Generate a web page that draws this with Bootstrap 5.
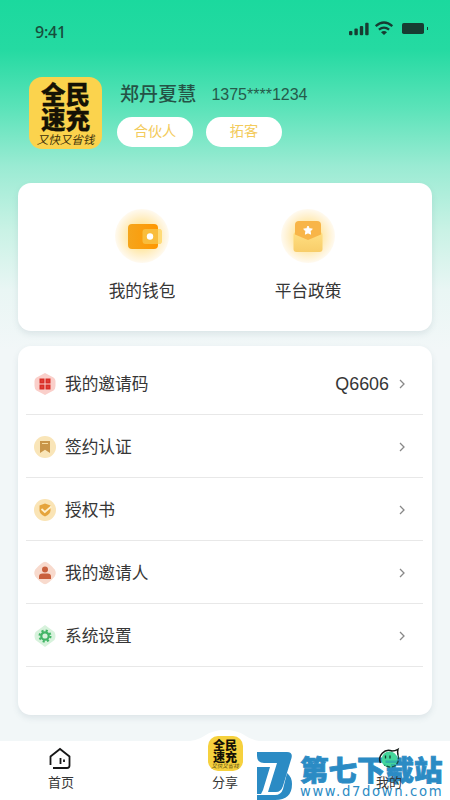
<!DOCTYPE html>
<html lang="zh-CN">
<head>
<meta charset="utf-8">
<meta name="viewport" content="width=device-width, initial-scale=1">
<title>我的</title>
<link rel="stylesheet" href="https://cdn.jsdelivr.net/npm/bootstrap@5.3.0/dist/css/bootstrap.min.css">
<style>
body{font-family:"Noto Sans CJK SC",sans-serif;color:#363636;line-height:1}
.phone{width:450px;height:800px;background:linear-gradient(#1bd99e 0,#25daa2 50px,#5be3b9 108px,#9aebd3 166px,#c9f2e5 230px,#e9f6f4 290px,#f2f7f8 350px)}
.status{height:76px;padding:20px 21px 0 35px}
.clock{font:500 16px/25px "Noto Sans",sans-serif;color:#174d3b;letter-spacing:-.2px}
.profile{height:107px;padding:1px 0 0 29px}
.logo{width:73px;height:72px;border-radius:13px;background:#fbd34d;color:#151205;padding-top:5px}
.logo-main{font-size:24.5px;font-weight:900;line-height:24.5px;-webkit-text-stroke:.3px #151205;height:51px}
.logo-sub{font:italic 11.5px/12px "Noto Sans CJK SC",sans-serif;white-space:nowrap;color:#3b3009}
.logo-mini{width:35px;height:35px;border-radius:10px;background:#f6d13e;padding-top:3px}
.logo-mini .logo-main{font-size:12px;line-height:12px;height:24px;-webkit-text-stroke:0}
.logo-mini .logo-sub{font-size:5.5px;line-height:7px;color:#6b5714}
.info{margin-left:18px;padding-top:6px}
.name{font-size:19px;line-height:20px;color:#255346;font-weight:500;letter-spacing:.1px}
.tel{font:16px/23px "Liberation Sans",sans-serif;color:#255b4b;margin-left:15px;height:21px}
.tags{margin:13px 0 0 -3px;gap:13px}
.pill{width:76px;height:30px;background:#fff;color:#f3cb5c;font-size:14.2px;line-height:27px;text-align:center}
.panel{margin:0 18px;border-radius:13px;background:#fff;box-shadow:0 3px 6px rgba(70,110,120,.12)}
.shortcuts{height:148px;padding-left:41px}
.shortcut{width:166px;padding-top:24px}
.shortcut-label{font-size:16.7px;line-height:24px;margin-top:11px}
.menu{height:369px;margin-top:15px;padding:6px 9px 0 8px}
.menu-row{height:63px;border-bottom:1px solid #e8e8e8;padding:2px 17px 0 7px;font-size:16.7px}
.menu-row span:not(.code){padding-bottom:2px}
.menu-icon{width:24px;height:24px;margin-right:8px}
.code{font:17.9px "Liberation Sans",sans-serif;margin-right:10px}
.tabs{position:relative;height:59px;margin-top:26px;background:#fff}
.bump{position:absolute;left:180px;top:-11px}
.tab{width:60px;font-size:13px}
.tab-home{margin-left:31px;padding-top:6px}
.tab-share{margin-left:104px;margin-top:-5px}
.tab-me{margin-left:104px;padding-top:6px;z-index:2}
.tab-label{line-height:18px;margin-top:2px}
.watermark{position:absolute;left:256px;top:11px;height:49px;color:#2b8bc4;z-index:1}
.wm-words{padding:1px 0 0 7px}
.wm-title{font-size:28.5px;font-weight:900;line-height:31px;-webkit-text-stroke:.8px #2b8bc4;white-space:nowrap}
.wm-url{font:13.2px/13px "DejaVu Sans",sans-serif;letter-spacing:1.65px;white-space:nowrap;margin-top:1px}
</style>
<script src="https://cdn.jsdelivr.net/npm/bootstrap@5.3.0/dist/js/bootstrap.bundle.min.js"></script>
</head>
<body>
<div class="phone overflow-hidden">
  <header class="status d-flex justify-content-between">
    <div class="clock">9:41</div>
    <svg width="80" height="20" viewBox="348 20 80 20" fill="#173c32">
      <rect x="348" y="31" width="3.4" height="4.3" rx="1"/><rect x="353.4" y="28.5" width="3.4" height="6.8" rx="1"/><rect x="358.8" y="26" width="3.4" height="9.3" rx="1"/><rect x="364.2" y="22.8" width="3.4" height="12.5" rx="1"/>
      <g fill="none" stroke="#173c32" stroke-width="2.3"><path d="M374.7 26.2q8.3-7.4 16.6 0"/><path d="M377.9 29.7q5.1-4.2 10.2 0"/></g><path d="M380 32.2q3-2.3 6 0l-3 2.800z"/>
      <rect x="401" y="23" width="22" height="11" rx="1.8"/><rect x="426" y="27" width="1" height="3"/>
    </svg>
  </header>
  <section class="profile d-flex">
    <div class="logo text-center"><div class="logo-main">全民<br>速充</div><div class="logo-sub">又快又省钱</div></div>
    <div class="info">
      <div class="d-flex"><div class="name">郑丹夏慧</div><div class="tel">1375****1234</div></div>
      <div class="tags d-flex"><span class="pill rounded-pill">合伙人</span><span class="pill rounded-pill">拓客</span></div>
    </div>
  </section>
  <section class="panel shortcuts d-flex">
    <div class="shortcut text-center">
      <svg width="60" height="60" viewBox="0 0 60 60"><defs><radialGradient id="halo"><stop offset=".45" stop-color="#ffe7a2"/><stop offset=".75" stop-color="#fff1cf"/><stop offset="1" stop-color="#fffaf0"/></radialGradient><linearGradient id="purse"><stop stop-color="#f5a51c"/><stop offset="1" stop-color="#ff9700"/></linearGradient></defs>
      <circle cx="30" cy="29" r="27" fill="url(#halo)"/><rect x="16" y="17" width="30" height="25" rx="4" fill="url(#purse)"/><rect x="30.500" y="22" width="19" height="15" rx="3" fill="#f9bd3c"/><path d="M46 22h1a3 3 0 0 1 3 3v9a3 3 0 0 1-3 3h-1z" fill="#ffdb77"/><circle cx="38" cy="29.500" r="3.200" fill="#fff"/></svg>
      <div class="shortcut-label">我的钱包</div>
    </div>
    <div class="shortcut text-center">
      <svg width="60" height="60" viewBox="0 0 60 60"><defs><linearGradient id="pocket" x2="0" y2="1"><stop stop-color="#ffdf82"/><stop offset="1" stop-color="#f8cd69"/></linearGradient></defs><circle cx="30" cy="29" r="27" fill="url(#halo)"/><rect x="15.500" y="25" width="29" height="20" rx="3" fill="url(#pocket)"/><path d="M17 18a4 4 0 0 1 4-4h18a4 4 0 0 1 4 4v9.500L30 33l-13-5.500z" fill="#f8b548"/><path d="M30 19l1.300 2.700 3 .4-2.200 2.100.5 3-2.600-1.400-2.600 1.400.5-3-2.200-2.100 3-.4z" fill="#fff" stroke="#fff" stroke-linejoin="round"/></svg>
      <div class="shortcut-label">平台政策</div>
    </div>
  </section>
  <section class="panel menu">
    <div class="menu-row d-flex align-items-center">
      <svg class="menu-icon" viewBox="0 0 24 24"><path d="M12 1l8.500 4.500q2 1 2 3.500v5q0 3-2 4.500L12 23l-8.500-4.500q-2-1.500-2-4.500V9q0-2.500 2-3.500z" fill="#facfca"/><path d="M6.500 6.500h5v5h-5zm6 0h5v5h-5zm-6 6h5v5h-5zm6 0h5v5h-5z" fill="#d92e27"/><path d="M8.500 8.500h1v1h-1zm6 0h1v1h-1zm-6 6h1v1h-1zm6 0h1v1h-1z" fill="#f4685a"/></svg>
      <span>我的邀请码</span><span class="code ms-auto">Q6606</span>
      <svg width="7" height="10" viewBox="0 0 7 10"><path d="M1 1l4 4-4 4" fill="none" stroke="#888" stroke-width="1.300"/></svg>
    </div>
    <div class="menu-row d-flex align-items-center">
      <svg class="menu-icon" viewBox="0 0 24 24"><circle cx="12" cy="12" r="11" fill="#f9e5b8"/><path d="M7 6h10v12l-5-3.200L7 18z" fill="#c99548"/><path d="M9 8.500h6" stroke="#f7dca0"/></svg>
      <span>签约认证</span>
      <svg class="ms-auto" width="7" height="10" viewBox="0 0 7 10"><path d="M1 1l4 4-4 4" fill="none" stroke="#888" stroke-width="1.300"/></svg>
    </div>
    <div class="menu-row d-flex align-items-center">
      <svg class="menu-icon" viewBox="0 0 24 24"><circle cx="12" cy="12" r="11" fill="#fae4b5"/><path d="M12 5.500l5.500 2v5q0 3.500-5.500 6-5.500-2.500-5.500-6v-5z" fill="#e5a43c"/><path d="M8.500 11l3.300 3 6.500-5.500" stroke="#fff0cc" stroke-width="1.800" fill="none"/></svg>
      <span>授权书</span>
      <svg class="ms-auto" width="7" height="10" viewBox="0 0 7 10"><path d="M1 1l4 4-4 4" fill="none" stroke="#888" stroke-width="1.300"/></svg>
    </div>
    <div class="menu-row d-flex align-items-center">
      <svg class="menu-icon" viewBox="0 0 24 24"><path d="M12 .8q3 0 9.500 7.500 2.500 3.700 0 7.400Q15 23.200 12 23.200T2.500 15.700q-2.500-3.700 0-7.400Q9 .8 12 .8z" fill="#f8dacd"/><circle cx="12" cy="8.600" r="3" fill="#c9603d"/><path d="M6 18v-2.500q0-3 3.500-3h5q3.500 0 3.500 3V18z" fill="#c9603d"/></svg>
      <span>我的邀请人</span>
      <svg class="ms-auto" width="7" height="10" viewBox="0 0 7 10"><path d="M1 1l4 4-4 4" fill="none" stroke="#888" stroke-width="1.300"/></svg>
    </div>
    <div class="menu-row d-flex align-items-center">
      <svg class="menu-icon" viewBox="0 0 24 24"><path d="M12 1l9.500 7q2 4 0 8L12 23l-9.500-7q-2-4 0-8z" fill="#d7f2dc"/><circle cx="12" cy="12" r="5.400" fill="none" stroke="#42b566" stroke-width="2.200" stroke-dasharray="2.120 2.120"/><circle cx="12" cy="12" r="3.700" fill="none" stroke="#42b566" stroke-width="2.200"/></svg>
      <span>系统设置</span>
      <svg class="ms-auto" width="7" height="10" viewBox="0 0 7 10"><path d="M1 1l4 4-4 4" fill="none" stroke="#888" stroke-width="1.300"/></svg>
    </div>
  </section>
  <nav class="tabs d-flex align-items-start">
    <svg class="bump" width="90" height="12" viewBox="0 0 90 12"><path d="M0 12q16 0 25-6.500Q33 0 45 0t20 5.500Q74 12 90 12z" fill="#fff"/></svg>
    <div class="tab tab-home d-flex flex-column align-items-center"><svg width="24" height="24" viewBox="0 0 24 24" fill="none" stroke="#171717" stroke-width="1.800"><path d="M1.500 18V9.500L11 2l9.500 7.500v9q0 2.500-2.500 2.500H4"/><path d="M11.500 11v6M15 12.500v2.500"/></svg><div class="tab-label">首页</div></div>
    <div class="tab tab-share position-relative d-flex flex-column align-items-center"><div class="logo logo-mini text-center"><div class="logo-main">全民<br>速充</div><div class="logo-sub">又快又省钱</div></div><div class="tab-label">分享</div></div>
    <div class="tab tab-me position-relative d-flex flex-column align-items-center"><svg width="24" height="24" viewBox="0 0 24 24"><circle cx="12.500" cy="12.500" r="8" fill="#43d69b"/><path d="M8.500 13.500h12v2.500h-12zM14 17h4v2h-4z" fill="#2b9fae" opacity=".7"/><path d="M3.500 16A9 9 0 0 1 15 4q3 0 6-1.700-.8 2.500 0 5.700" fill="none" stroke="#151b18" stroke-width="1.500"/><path d="M21 8q2 7-3.500 11-5 2.500-10-1" fill="none" stroke="#174e3e" stroke-width="1.300" stroke-dasharray="4 1.500"/><path d="M8.500 8.500v3M13 8.500v3" stroke="#12392c" stroke-width="1.300"/></svg><div class="tab-label">我的</div></div>
    <div class="watermark d-flex">
      <svg width="37" height="49" viewBox="0 0 37 49" fill="#2b8bc4"><path d="M1 0h30q6 0 4.500 6L27 34q-2 6-7 6h-8l9-29H8Q1 11 1 4z"/><path d="M1 15h13L7 38l-2 4H1zM31 21q5 4 5 11 0 16-17 16H1v-5h18q6 0 8-6z"/></svg>
      <div class="wm-words"><div class="wm-title">第七下载站</div><div class="wm-url">www.d7down.com</div></div>
    </div>
  </nav>
</div>
</body>
</html>
